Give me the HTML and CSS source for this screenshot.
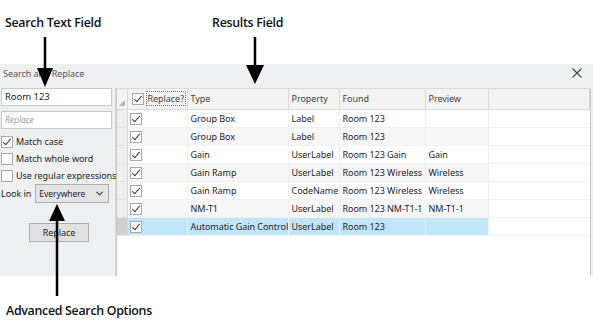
FILE: index.html
```html
<!DOCTYPE html>
<html>
<head lang="en">
    <meta charset="UTF-8">
    <title>Search and Replace</title>
    <link rel="stylesheet" href="styles.css">
</head>
<body>
<div id="page">
    <div class="notes-top">
        <span class="note note-search">Search Text Field</span>
        <span class="note note-results">Results Field</span>
    </div>
    <div class="dialog">
        <div class="titlebar">
            <span class="title">Search and Replace</span>
            <svg class="close" width="10" height="10" viewBox="0 0 10 10"><path d="M0.5 0.5L9.5 9.5M9.5 0.5L0.5 9.5" stroke="#444" stroke-width="1.1"/></svg>
        </div>
        <div class="dlg-body">
            <div class="side">
                <div class="field">Room 123</div>
                <div class="field placeholder">Replace</div>
                <label class="opt"><span class="box checked"></span>Match case</label>
                <label class="opt"><span class="box"></span>Match whole word</label>
                <label class="opt"><span class="box"></span>Use regular expressions</label>
                <div class="lookin">
                    <span>Look in</span>
                    <div class="select">Everywhere
                        <svg width="7" height="5" viewBox="0 0 7 5"><path d="M0.5 0.8L3.5 3.8L6.5 0.8" stroke="#333" fill="none" stroke-width="1.1"/></svg>
                    </div>
                </div>
                <div class="btn">Replace</div>
            </div>
            <div class="grid">
                <table>
                    <colgroup>
                        <col style="width:10px"><col style="width:60px"><col style="width:101px"><col style="width:51px"><col style="width:86px"><col style="width:63px"><col>
                    </colgroup>
                    <tr class="head">
                        <th class="corner"><svg width="6" height="6" viewBox="0 0 6 6"><path d="M6 0L6 6L0 6Z" fill="#b5b5b5"/></svg></th>
                        <th class="chk"><span class="box checked"></span><span class="focus">Replace?</span></th>
                        <th>Type</th><th>Property</th><th>Found</th><th>Preview</th><th></th>
                    </tr>
                    <tr><td class="rh"></td><td class="chk"><span class="box checked"></span></td><td>Group Box</td><td>Label</td><td>Room 123</td><td></td><td class="fill"></td></tr>
                    <tr class="alt"><td class="rh"></td><td class="chk"><span class="box checked"></span></td><td>Group Box</td><td>Label</td><td>Room 123</td><td></td><td class="fill"></td></tr>
                    <tr><td class="rh"></td><td class="chk"><span class="box checked"></span></td><td>Gain</td><td>UserLabel</td><td>Room 123 Gain</td><td>Gain</td><td class="fill"></td></tr>
                    <tr class="alt"><td class="rh"></td><td class="chk"><span class="box checked"></span></td><td>Gain Ramp</td><td>UserLabel</td><td>Room 123 Wireless</td><td>Wireless</td><td class="fill"></td></tr>
                    <tr><td class="rh"></td><td class="chk"><span class="box checked"></span></td><td>Gain Ramp</td><td>CodeName</td><td>Room 123 Wireless</td><td>Wireless</td><td class="fill"></td></tr>
                    <tr class="alt"><td class="rh"></td><td class="chk"><span class="box checked"></span></td><td>NM-T1</td><td>UserLabel</td><td>Room 123 NM-T1-1</td><td>NM-T1-1</td><td class="fill"></td></tr>
                    <tr class="sel"><td class="rh"></td><td class="chk"><span class="box checked"></span></td><td>Automatic Gain Control</td><td>UserLabel</td><td>Room 123</td><td></td><td class="fill"></td></tr>
                </table>
            </div>
        </div>
    </div>
    <div class="notes-bottom">
        <span class="note">Advanced Search Options</span>
    </div>
    <svg class="arrows" width="593" height="322" viewBox="0 0 593 322">
        <path d="M45 37V70" stroke="#000" stroke-width="2.5"/>
        <path d="M37 68L45 87L53 68Z" fill="#000"/>
        <path d="M255 37V67" stroke="#000" stroke-width="2.5"/>
        <path d="M246 65L255 84L264 65Z" fill="#000"/>
        <path d="M57 296V218" stroke="#000" stroke-width="2.5"/>
        <path d="M49 221L57 204L65 221Z" fill="#000"/>
    </svg>
</div>
</body>
</html>
```

FILE: styles.css
```css
*{
    margin: 0;
    padding: 0;
    box-sizing: border-box;
}
body{
    background: #fff;
    font-family: "Noto Sans", "Open Sans", sans-serif;
    color: #1e1e1e;
}
#page{
    width: 593px;
    height: 322px;
    position: relative;/*arrows sit over the dialog*/
    overflow: hidden;
}
.note{
    font-family: "Open Sans", sans-serif;
    font-size: 12.4px;
    font-weight: 600;
    letter-spacing: -0.3px;
    color: #111;
    white-space: nowrap;
}
.notes-top{
    height: 64px;
    display: flex;
    align-items: flex-start;
    padding-top: 14px;
}
.note-search{
    margin-left: 5px;
}
.note-results{
    margin-left: 111px;
}
.dialog{
    height: 212px;
    background: #eff0f2;
    display: flex;
    flex-direction: column;
    font-size: 9px;
    letter-spacing: -0.05px;
}
.titlebar{
    height: 24px;
    display: flex;
    align-items: flex-start;
    justify-content: space-between;
    padding: 3px 11px 0 3px;
}
.title{
    color: #555;
    font-size: 9px;
}
.close{
    margin-top: 1px;
}
.dlg-body{
    flex: 1;
    display: flex;
    padding-right: 2px;
}
.side{
    width: 116px;
    border-right: 1px solid #d9d9d9;
    padding-left: 1px;
}
.field{
    width: 111px;
    height: 18px;
    background: #fff;
    border: 1px solid #c9c9c9;
    padding-left: 3px;
    line-height: 16px;
    margin-bottom: 5px;
    font-size: 9.5px;
}
.placeholder{
    color: #a0a0a0;
    font-style: italic;
    font-size: 8.5px;
    margin-bottom: 4px;
}
.opt{
    display: flex;
    align-items: center;
    height: 17px;
    white-space: nowrap;
}
.box{
    display: inline-block;
    width: 12px;
    height: 12px;
    background: #fff;
    border: 1px solid #a8a8a8;
    margin-right: 3px;
    position: relative;
    flex: none;
}
.box.checked::after{
    content: "";
    position: absolute;
    left: 3px;
    top: 0px;
    width: 3px;
    height: 7px;
    border: solid #333;
    border-width: 0 1.5px 1.5px 0;
    transform: rotate(40deg);
}
.lookin{
    display: flex;
    align-items: center;
    white-space: nowrap;
}
.select{
    margin-left: 4px;
    width: 74px;
    height: 19px;
    border: 1px solid #adadad;
    background: #e5e5e5;
    display: flex;
    align-items: center;
    justify-content: space-between;
    padding: 0 5px 0 3px;
    font-size: 8.5px;
}
.btn{
    width: 60px;
    height: 19px;
    margin: 20px 0 0 28px;
    border: 1px solid #adadad;
    background: #e1e1e1;
    text-align: center;
    line-height: 17px;
}
.grid{
    flex: 1;
    background: #fff;
    border: 1px solid #c8c8c8;
    border-top: 1px solid #dcdcdc;
    border-bottom: 0;
}
table{
    border-collapse: collapse;
    table-layout: fixed;
    width: 100%;
}
th, td{
    height: 18px;
    text-align: left;
    font-weight: normal;
    padding: 0 0 0 3px;
    white-space: nowrap;
    overflow: hidden;
    border-right: 1px solid #f0f0f0;
    border-bottom: 1px solid #f0f0f0;
    line-height: 12px;
}
th{
    height: 17px;
    background: #f3f3f3;
    color: #444;
    border-right: 1px solid #d8d8d8;
    border-bottom: 1px solid #d8d8d8;
}
th.corner{
    padding: 8px 0 0 2px;
    vertical-align: top;
}
.chk{
    padding-left: 2px;
}
th.chk{
    padding-left: 4px;
}
th.chk .box{
    margin-right: 2px;
    vertical-align: middle;
}
td.chk .box{
    vertical-align: middle;
}
.focus{
    border: 1px dotted #777;
    padding: 0 1px;
}
td.rh{
    background: #f0f0f0;
    border-right: 1px solid #d8d8d8;
    border-bottom: 1px solid #e4e4e4;
}
tr.alt td{
    background: #f6f6f6;
}
tr.alt td.rh{
    background: #f0f0f0;
}
tr.sel td{
    background: #c3e5f9;
}
tr.sel td.rh{
    background: #d0d0d0;
}
td.fill, tr.alt td.fill, tr.sel td.fill{
    background: #fff;
    border-right: 0;
}
.notes-bottom{
    padding: 22px 0 0 6px;
}
.arrows{
    position: absolute;
    left: 0;
    top: 0;
}
```
